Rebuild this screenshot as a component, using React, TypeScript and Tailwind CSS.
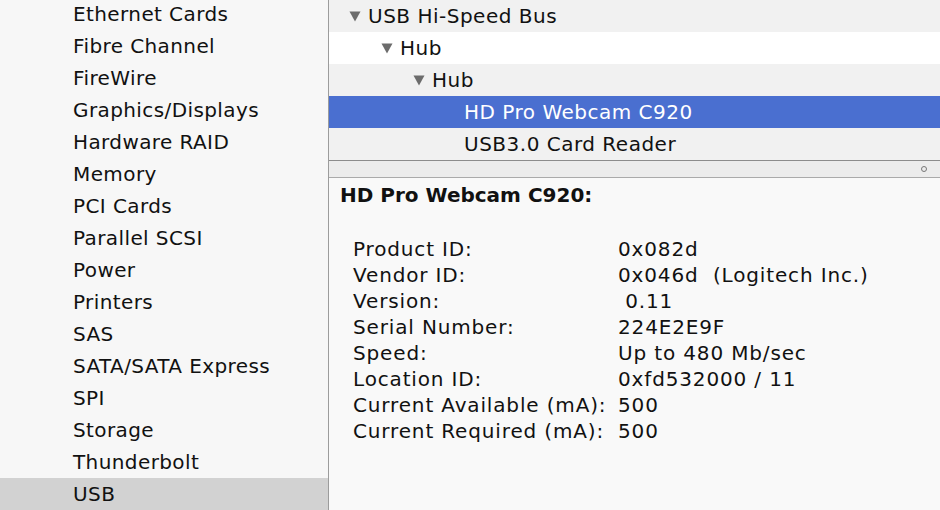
import React from "react";

const sidebarItems = [
  "Ethernet Cards",
  "Fibre Channel",
  "FireWire",
  "Graphics/Displays",
  "Hardware RAID",
  "Memory",
  "PCI Cards",
  "Parallel SCSI",
  "Power",
  "Printers",
  "SAS",
  "SATA/SATA Express",
  "SPI",
  "Storage",
  "Thunderbolt",
  "USB",
];

type TreeRow = {
  label: string;
  level: number;
  open?: boolean;
  selected?: boolean;
};

const treeRows: TreeRow[] = [
  { label: "USB Hi-Speed Bus", level: 0, open: true },
  { label: "Hub", level: 1, open: true },
  { label: "Hub", level: 2, open: true },
  { label: "HD Pro Webcam C920", level: 3, selected: true },
  { label: "USB3.0 Card Reader", level: 3 },
];

const details: [string, string][] = [
  ["Product ID:", "0x082d"],
  ["Vendor ID:", "0x046d  (Logitech Inc.)"],
  ["Version:", " 0.11"],
  ["Serial Number:", "224E2E9F"],
  ["Speed:", "Up to 480 Mb/sec"],
  ["Location ID:", "0xfd532000 / 11"],
  ["Current Available (mA):", "500"],
  ["Current Required (mA):", "500"],
];

// small grey disclosure triangle
const Disclosure: React.FC = () => (
  <svg width="12" height="11" viewBox="0 0 12 11" className="shrink-0">
    <path d="M0.5 0.5 L11.5 0.5 L6 10.5 Z" fill="#6c6c6c" />
  </svg>
);

const Tree: React.FC = () => (
  <div className="flex flex-col tracking-[0.5px]">
    {treeRows.map((row, i) => {
      const bg = row.selected
        ? "bg-[#4a6fd0] text-white"
        : i % 2 === 0
          ? "bg-[#f1f1f1] text-[#111]"
          : "bg-white text-[#111]";
      const indent = ["pl-[20px]", "pl-[52px]", "pl-[84px]", "pl-[116px]"][row.level];
      return (
        <div key={i} className={`h-8 flex items-center ${indent} ${bg}`}>
          {row.open ? <Disclosure /> : <span className="w-[12px] shrink-0" />}
          <span className="ml-[7px] whitespace-nowrap">{row.label}</span>
        </div>
      );
    })}
  </div>
);

export default function App() {
  return (
    <div
      className="w-[940px] h-[510px] overflow-hidden flex bg-[#f8f8f8] text-[20px] leading-none"
      style={{ fontFamily: '"DejaVu Sans", "Liberation Sans", sans-serif' }}
    >
      {/* source list */}
      <div className="w-[329px] shrink-0 border-r border-[#9c9c9c] bg-[#f7f7f7] tracking-[0.4px]">
        <div className="-mt-[2px] flex flex-col">
          {sidebarItems.map((item) => (
            <div
              key={item}
              className={`h-8 flex items-center pl-[73px] text-[#111] ${
                item === "USB" ? "bg-[#d2d2d2]" : ""
              }`}
            >
              {item}
            </div>
          ))}
        </div>
      </div>

      {/* device tree + detail pane */}
      <div className="flex-1 flex flex-col min-w-0">
        <Tree />
        <div className="h-[18px] border-y border-t-[#8c8c8c] border-b-[#aaaaaa] bg-[#ececec] flex items-center justify-end pr-[13px]">
          <span className="w-[6px] h-[6px] rounded-full border border-[#777]" />
        </div>
        <div className="flex-1 bg-[#f9f9f9] pl-[11px] pt-[4px] text-[#111]">
          <div className="h-[26px] flex items-center font-bold">HD Pro Webcam C920:</div>
          <div className="mt-[28px] pl-[13px] flex flex-col tracking-[0.85px]">
            {details.map(([k, v]) => (
              <div key={k} className="h-[26px] flex items-center">
                <span className="w-[265px] shrink-0 whitespace-nowrap">{k}</span>
                <span className="whitespace-pre">{v}</span>
              </div>
            ))}
          </div>
        </div>
      </div>
    </div>
  );
}
